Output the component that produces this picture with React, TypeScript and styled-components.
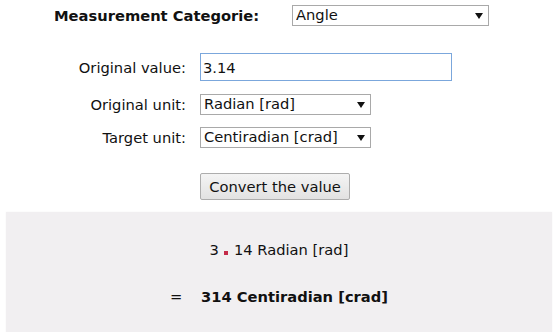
import React from "react";
import styled, { createGlobalStyle } from "styled-components";

const Global = createGlobalStyle`
  html, body { margin: 0; padding: 0; background: #fff; }
  body { font-family: "DejaVu Sans", Verdana, sans-serif; font-size: 14.7px; color: #111; }
`;

const Page = styled.div`
  width: 557px;
  height: 332px;
  overflow: hidden;
  padding-top: 5px;
  box-sizing: border-box;
`;

const CategoryRow = styled.div`
  display: flex;
  align-items: center;
  padding-left: 54px;
  height: 21px;
`;

const CategoryLabel = styled.label`
  font-weight: bold;
  width: 238px;
`;

const Form = styled.div`
  display: grid;
  grid-template-columns: 186px auto;
  column-gap: 14px;
  align-items: center;
  justify-items: start;
  margin-top: 27px;
`;

const Label = styled.label<{ $top: number }>`
  justify-self: end;
  margin-top: ${(p) => p.$top}px;
`;

const Cell = styled.div<{ $top: number }>`
  margin-top: ${(p) => p.$top}px;
`;

const TextInput = styled.input`
  box-sizing: border-box;
  width: 252px;
  height: 28px;
  border: 1px solid #7ba7dc;
  padding: 0 2px;
  font: inherit;
  color: #111;
  outline: none;
  background: #fff;
`;

const SelectWrap = styled.div<{ $w: number; $h: number }>`
  position: relative;
  width: ${(p) => p.$w}px;
  height: ${(p) => p.$h}px;
`;

const NativeSelect = styled.select`
  appearance: none;
  -webkit-appearance: none;
  box-sizing: border-box;
  width: 100%;
  height: 100%;
  border: 1px solid #a9a9a9;
  border-radius: 0;
  background: #fff;
  font: inherit;
  color: #111;
  padding: 0 0 0 3px;
  margin: 0;
  line-height: 1;
`;

const Arrow = styled.svg`
  position: absolute;
  right: 6px;
  top: 50%;
  margin-top: -3px;
  pointer-events: none;
`;

const Button = styled.button`
  box-sizing: border-box;
  height: 27px;
  width: 150px;
  border: 1px solid #adadad;
  border-radius: 2px;
  background: linear-gradient(#f4f4f4, #e2e2e2);
  font: inherit;
  color: #111;
  padding: 0 7px;
  white-space: nowrap;
`;

const Result = styled.div`
  margin: 12px 5px 0 6px;
  height: 130px;
  background: #f1eff1;
  box-shadow: 0 0 2px rgba(0, 0, 0, 0.04);
  text-align: center;
  padding-top: 29px;
  box-sizing: border-box;
`;

const Line = styled.div<{ $top: number }>`
  margin-top: ${(p) => p.$top}px;
  line-height: 18px;
`;

const Dot = styled.span`
  display: inline-block;
  width: 4px;
  height: 4px;
  background: #c42a48;
  margin: 0 6px 0 5px;
  vertical-align: baseline;
`;

const Strong = styled.b`
  font-weight: bold;
`;

function Select({ w, h, value }: { w: number; h: number; value: string }) {
  return (
    <SelectWrap $w={w} $h={h}>
      <NativeSelect defaultValue={value}>
        <option>{value}</option>
      </NativeSelect>
      <Arrow width="8" height="6" viewBox="0 0 8 6">
        <path d="M0 0 H8 L4 6 Z" fill="#111" />
      </Arrow>
    </SelectWrap>
  );
}

export default function App() {
  return (
    <>
      <Global />
      <Page>
        <CategoryRow>
          <CategoryLabel>Measurement Categorie:</CategoryLabel>
          <Select w={197} h={21} value="Angle" />
        </CategoryRow>
        <Form>
          <Label $top={0}>Original value:</Label>
          <Cell $top={0}>
            <TextInput defaultValue="3.14" />
          </Cell>
          <Label $top={13}>Original unit:</Label>
          <Cell $top={13}>
            <Select w={171} h={21} value="Radian [rad]" />
          </Cell>
          <Label $top={12}>Target unit:</Label>
          <Cell $top={12}>
            <Select w={171} h={21} value="Centiradian [crad]" />
          </Cell>
          <span />
          <Cell $top={25}>
            <Button>Convert the value</Button>
          </Cell>
        </Form>
        <Result>
          <Line $top={0}>
            3<Dot />14 Radian [rad]
          </Line>
          <Line $top={29}>
            =&nbsp;&nbsp;&nbsp; <Strong>314 Centiradian [crad]</Strong>
          </Line>
        </Result>
      </Page>
    </>
  );
}
